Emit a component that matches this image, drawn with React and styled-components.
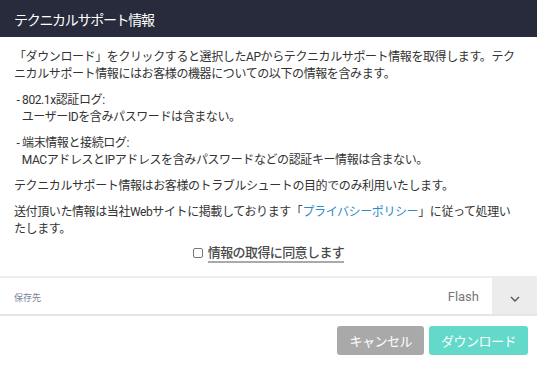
import React, { useState } from "react";
import styled, { createGlobalStyle } from "styled-components";

const Global = createGlobalStyle`
	html, body {
		margin: 0;
		padding: 0;
		background: #fff;
	}
	body {
		font-family: Roboto, "Noto Sans CJK JP", sans-serif;
	}
`;

const Dialog = styled.div`
	width: 537px;
	height: 366px;
	background: #fff;
	display: flex;
	flex-direction: column;
	overflow: hidden;
`;

const Header = styled.header`
	height: 37px;
	background: #282b3c;
	color: #fff;
	display: flex;
	align-items: center;
	padding: 0 14px;
	font-size: 14px;
	letter-spacing: -1.3px;
`;

const Body = styled.div`
	padding: 12px 14px 0 14px;
	font-size: 12px;
	line-height: 17px;
	letter-spacing: -0.4px;
	color: #333;
`;

const P = styled.p`
	margin: 0 0 9px 0;
`;

const Link = styled.a`
	color: #2e8bc9;
	text-decoration: none;
`;

const AgreeRow = styled.label`
	display: flex;
	justify-content: center;
	align-items: center;
	gap: 5px;
	height: 20px;
	margin: -4px 0 13px;
	font-size: 13px;
	letter-spacing: -0.6px;
	color: #4a4a4a;
	font-weight: 500;
`;

const Check = styled.input`
	appearance: none;
	width: 10px;
	height: 10px;
	margin: 0;
	border: 1px solid #777;
	border-radius: 2px;
	background: #fff;
`;

const AgreeText = styled.span`
	border-bottom: 2px solid #aaa;
	line-height: 16px;
	padding-top: 2px;
`;

const SelectRow = styled.div`
	display: flex;
	align-items: stretch;
	height: 36px;
	border-top: 2px solid #ececec;
	border-bottom: 2px solid #e6e6e6;
`;

const SelectLabel = styled.span`
	flex: 1;
	display: flex;
	align-items: center;
	padding-left: 14px;
	font-size: 9px;
	color: #7d8199;
	padding-top: 2px;
`;

const SelectValue = styled.span`
	display: flex;
	align-items: center;
	padding-right: 13px;
	font-size: 13px;
	color: #777;
`;

const Caret = styled.span`
	width: 45px;
	background: #ececec;
	display: flex;
	align-items: center;
	justify-content: center;
	padding-top: 6px;
	box-sizing: border-box;
`;

const Footer = styled.div`
	display: flex;
	justify-content: flex-end;
	gap: 5px;
	padding: 10px 9px 0 0;
`;

const Button = styled.button`
	height: 29px;
	padding: 0 12px;
	border: none;
	border-radius: 3px;
	background: ${props => props.primary ? "#63d9c9" : "#a9a9a9"};
	color: #fff;
	font-family: Roboto, "Noto Sans CJK JP", sans-serif;
	font-size: 13px;
	letter-spacing: -0.5px;
`;

export default function App() {
	const [agreed, setAgreed] = useState(false);

	return (
		<Dialog>
			<Global/>
			<Header>テクニカルサポート情報</Header>
			<Body>
				<P>「ダウンロード」をクリックすると選択したAPからテクニカルサポート情報を取得します。テク<br/>ニカルサポート情報にはお客様の機器についての以下の情報を含みます。</P>
				<P>&nbsp;- 802.1x認証ログ:<br/>&nbsp;&nbsp;&nbsp;ユーザーIDを含みパスワードは含まない。</P>
				<P>&nbsp;- 端末情報と接続ログ:<br/>&nbsp;&nbsp;&nbsp;MACアドレスとIPアドレスを含みパスワードなどの認証キー情報は含まない。</P>
				<P>テクニカルサポート情報はお客様のトラブルシュートの目的でのみ利用いたします。</P>
				<P>送付頂いた情報は当社Webサイトに掲載しております「<Link href="#">プライバシーポリシー</Link>」に従って処理い<br/>たします。</P>
			</Body>
			<AgreeRow>
				<Check type="checkbox" checked={agreed} onChange={e => setAgreed(e.target.checked)}/>
				<AgreeText>情報の取得に同意します</AgreeText>
			</AgreeRow>
			<SelectRow>
				<SelectLabel>保存先</SelectLabel>
				<SelectValue>Flash</SelectValue>
				<Caret>
					<svg width="10" height="6" viewBox="0 0 10 6">
						<polyline points="1,1 5,5 9,1" fill="none" stroke="#555" strokeWidth="1.4"/>
					</svg>
				</Caret>
			</SelectRow>
			<Footer>
				<Button>キャンセル</Button>
				<Button primary>ダウンロード</Button>
			</Footer>
		</Dialog>
	);
}
